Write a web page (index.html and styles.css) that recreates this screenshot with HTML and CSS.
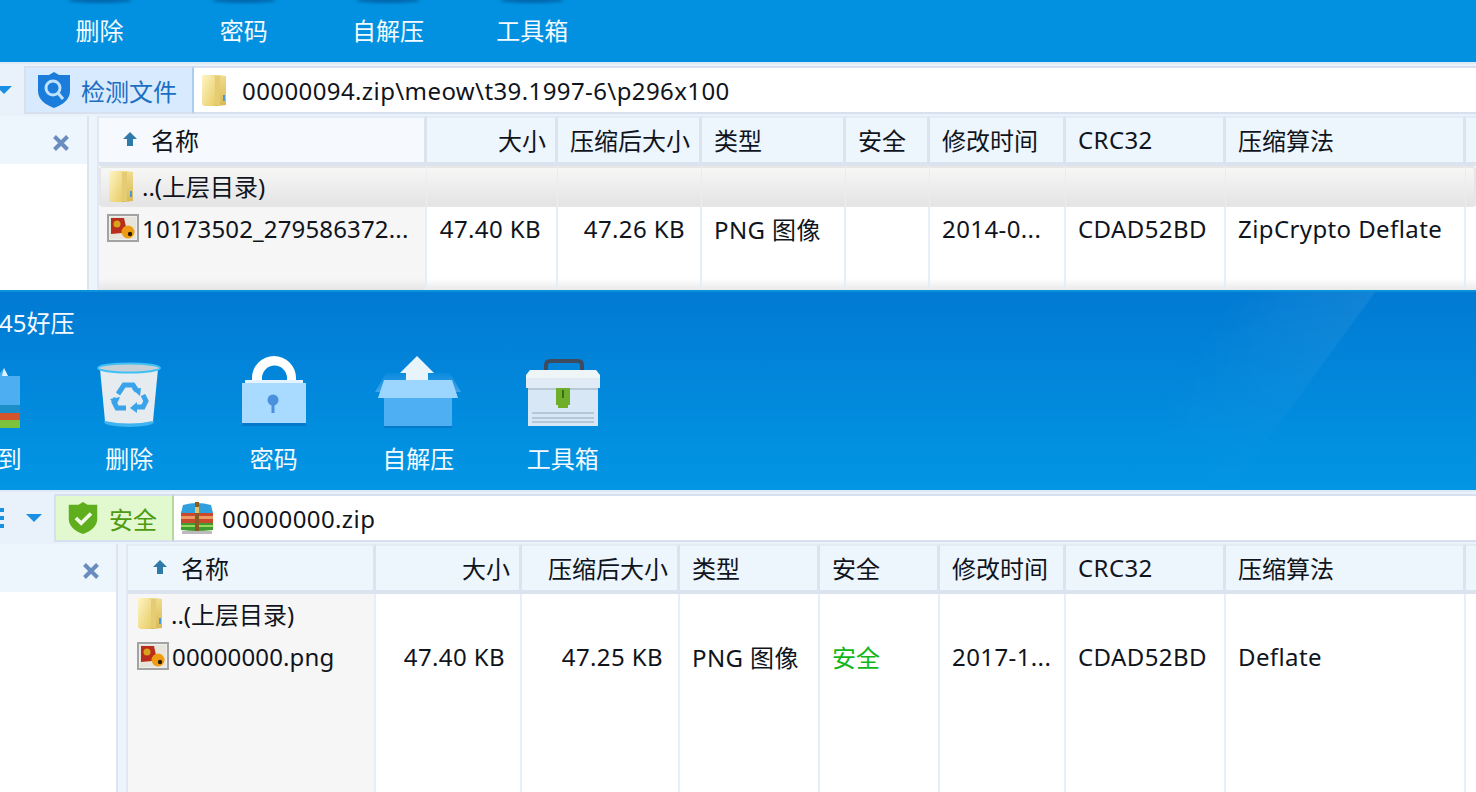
FILE: index.html
```html
<!DOCTYPE html>
<html lang="zh-CN">
<head>
<meta charset="utf-8">
<title>好压</title>
<link rel="stylesheet" href="styles.css">
</head>
<body>
<svg class="defs" width="0" height="0" aria-hidden="true">
  <defs>
    <linearGradient id="fold" x1="0" y1="0" x2="1" y2="1"><stop offset="0" stop-color="#fdf5c4"/><stop offset="1" stop-color="#e8cc66"/></linearGradient>
    <linearGradient id="fold2" x1="0" y1="0" x2="0" y2="1"><stop offset="0" stop-color="#f0dc8c"/><stop offset="1" stop-color="#d9b955"/></linearGradient>
    <linearGradient id="flap" x1="0" y1="0" x2="0" y2="1"><stop offset="0" stop-color="#3fa3ea" stop-opacity=".15"/><stop offset="1" stop-color="#3fa3ea"/></linearGradient>
    <symbol id="i-folder" viewBox="0 0 26 34">
      <path d="M1 2h17l7 1v29l-9 1-2 0H4l-3-2z" fill="url(#fold2)"/>
      <path d="M1 2h10l3 2v29H4l-3-2z" fill="url(#fold)"/>
      <path d="M14 3h5v29h-5z" fill="#e5cc74"/>
      <rect x="22" y="22" width="2" height="6" fill="#4a9ad8"/>
    </symbol>
    <symbol id="i-png" viewBox="0 0 32 28">
      <rect x="1" y="1" width="30" height="26" fill="#eee" stroke="#a3a3a3" stroke-width="2"/>
      <rect x="3" y="3" width="26" height="22" fill="#e7e5da"/>
      <path d="M4 4h13l2 9-4 6-11 1z" fill="#b92d1d"/>
      <circle cx="10" cy="10" r="3.500" fill="#d8a21c"/>
      <circle cx="21" cy="18" r="6.500" fill="#ef9c12"/>
      <circle cx="23" cy="20" r="2.200" fill="#2a1a08"/>
    </symbol>
    <symbol id="i-rar" viewBox="0 0 32 32">
      <path d="M2 3q14-4 28 0l2 8H0z" fill="#2f9fde"/>
      <rect y="11" width="32" height="10" fill="#c9492c"/>
      <rect y="14" width="32" height="3" fill="#ea9a62"/>
      <path d="M0 21h32v7q-16 2-32 0z" fill="#3f9a30"/>
      <rect y="23" width="32" height="2" fill="#9bd85a"/>
      <rect x="14" y="0" width="4" height="29" fill="#8a5a22"/>
      <rect x="14" y="5" width="4" height="6" fill="#e5c368"/>
      <rect x="1" y="29" width="30" height="3" fill="#bbb"/>
    </symbol>
  </defs>
</svg>

<section class="win win-a">
  <div class="bar bar-a">
    <div class="tools tools-a">
      <div class="tool"><i class="shade"></i><span>删除</span></div>
      <div class="tool"><i class="shade"></i><span>密码</span></div>
      <div class="tool"><i class="shade"></i><span>自解压</span></div>
      <div class="tool"><i class="shade"></i><span>工具箱</span></div>
    </div>
  </div>
  <div class="addr">
    <svg class="caret" viewBox="0 0 16 8"><path d="M0 0h16L8 8z" fill="#1a8fe3"/></svg>
    <div class="scan scan-blue">
      <svg class="shield" viewBox="0 0 32 36">
        <path d="M16 0l5 3h11v16c0 9-8 14-16 17C8 33 0 28 0 19V3h11z" fill="#1a7ddb"/>
        <circle cx="15" cy="16" r="7" fill="#1a7ddb" stroke="#bfe2ff" stroke-width="3"/>
        <path d="M20 21l5 6" stroke="#bfe2ff" stroke-width="3"/>
      </svg>
      <span>检测文件</span>
    </div>
    <div class="path">
      <svg class="ico-folder"><use href="#i-folder"/></svg>
      <span class="lat">00000094.zip\meow\t39.1997-6\p296x100</span>
    </div>
  </div>
  <div class="body">
    <div class="side"><div class="side-head"><svg class="close" viewBox="0 0 18 18"><path d="M2.500 2.500l13 13M15.500 2.500l-13 13" fill="none" stroke="#6a8cbe" stroke-width="4"/></svg></div></div>
    <div class="split"></div>
    <div class="table">
      <div class="row head">
        <div class="c name"><svg class="sort" viewBox="0 0 14 14"><path d="M7 0l7 7H10v7H4V7H0z" fill="#2f7aa8"/></svg>名称</div>
        <div class="c right">大小</div><div class="c right">压缩后大小</div><div class="c">类型</div><div class="c">安全</div><div class="c">修改时间</div><div class="c lat">CRC32</div><div class="c">压缩算法</div><div class="c"></div>
      </div>
      <div class="row up sel">
        <div class="c name"><svg class="ico-folder"><use href="#i-folder"/></svg>..(上层目录)</div>
        <div class="c"></div><div class="c"></div><div class="c"></div><div class="c"></div><div class="c"></div><div class="c"></div><div class="c"></div><div class="c"></div>
      </div>
      <div class="row file">
        <div class="c name"><svg class="ico-png"><use href="#i-png"/></svg><span class="lat-s">10173502_279586372...</span></div>
        <div class="c right lat">47.40 KB</div><div class="c right lat">47.26 KB</div><div class="c lat">PNG 图像</div><div class="c"></div><div class="c lat">2014-0...</div><div class="c lat">CDAD52BD</div><div class="c lat">ZipCrypto Deflate</div><div class="c"></div>
      </div>
      <div class="row fill">
        <div class="c name"></div><div class="c"></div><div class="c"></div><div class="c"></div><div class="c"></div><div class="c"></div><div class="c"></div><div class="c"></div><div class="c"></div>
      </div>
    </div>
  </div>
</section>

<section class="win win-b">
  <div class="bar bar-b">
    <div class="title">45好压</div>
    <div class="tools tools-b">
      <div class="tool">
        <svg class="big big-extract" viewBox="0 0 24 60"><path d="M0 8l6-8 4 8h12v36H0z" fill="#4eaef2"/><path d="M6 0l4 8H4z" fill="#dff1ff"/><rect y="37" width="22" height="8" fill="#1c8fc9"/><rect y="45" width="22" height="7" fill="#d4552b"/><rect y="52" width="22" height="8" fill="#7cc23a"/></svg>
        <span class="cut">到</span>
      </div>
      <div class="tool">
        <svg class="big big-trash" viewBox="0 0 64 66">
          <ellipse cx="32" cy="60" rx="25" ry="5" fill="#3fb4f0"/>
          <path d="M3 7h58l-5 52q-24 5-48 0z" fill="#e6ebf0"/>
          <ellipse cx="32" cy="6" rx="31" ry="4.500" fill="#c7d0d6" stroke="#3cc0f5" stroke-width="2"/>
          <g fill="none" stroke="#3aa3ea" stroke-width="5">
            <path d="M21 32l6-9h9l4 6"/><path d="M46 33l3 6-3 6h-8"/><path d="M29 46h-9l-3-6 2-4"/>
          </g>
          <g fill="#3aa3ea"><path d="M35 27l9-1-1 8z"/><path d="M40 40v11l-7-5z"/><path d="M13 37l10-2-4 9z"/></g>
        </svg>
        <span>删除</span>
      </div>
      <div class="tool">
        <svg class="big big-lock" viewBox="0 0 64 72">
          <path d="M10 25V22a22 22 0 0 1 44 0V25h-9V22a12.500 12.500 0 0 0-25 0V25z" fill="#fff"/>
          <rect x="3" y="24" width="58" height="3" fill="#e4f3ff"/>
          <rect y="27" width="64" height="40" fill="#a8dbff"/>
          <rect y="67" width="64" height="3" fill="#0a6cbd" opacity=".6"/>
          <circle cx="31" cy="44" r="5.500" fill="#4a90dc"/><rect x="29.500" y="44" width="3" height="13" fill="#4a90dc"/>
        </svg>
        <span>密码</span>
      </div>
      <div class="tool">
        <svg class="big big-box" viewBox="0 0 88 72">
          <path d="M1 36l11-19h64l11 19z" fill="url(#flap)"/>
          <path d="M43 0l17 17h-6v8H32v-8h-6z" fill="#e8f4fc"/>
          <rect x="10" y="42" width="68" height="28" fill="#4eaff3"/>
          <path d="M10 24h68l6 18H4z" fill="#9cd6ff"/>
          <rect x="10" y="70" width="68" height="2" fill="#0a6cbd" opacity=".6"/>
        </svg>
        <span>自解压</span>
      </div>
      <div class="tool">
        <svg class="big big-toolbox" viewBox="0 0 76 70">
          <path d="M21 14V7q0-4 4-4h28q4 0 4 4v7" fill="none" stroke="#3e4a60" stroke-width="4"/>
          <rect x="3" y="30" width="70" height="38" fill="#d8e7f5"/>
          <path d="M5 12h66l4 5v13H1V17z" fill="#eef5f7"/>
          <rect x="1" y="20" width="74" height="10" fill="#e0ebf5"/>
          <rect x="3" y="30" width="70" height="2" fill="#b8c9d8"/>
          <path d="M31 30h14v17h-2v3H33v-3h-2z" fill="#6fae2b"/><rect x="37" y="32" width="2" height="8" fill="#38700f"/>
          <g fill="#b4c8da"><rect x="7" y="54" width="62" height="2"/><rect x="7" y="59" width="62" height="2"/><rect x="7" y="63" width="62" height="2"/></g>
        </svg>
        <span>工具箱</span>
      </div>
    </div>
  </div>
  <div class="addr">
    <span class="dots"><i></i><i></i><i></i></span>
    <svg class="caret caret-b" viewBox="0 0 16 8"><path d="M0 0h16L8 8z" fill="#1a8fe3"/></svg>
    <div class="scan scan-green">
      <svg class="shield shield-g" viewBox="0 0 32 36">
        <path d="M16 0l5 3h11v16c0 9-8 14-16 17C8 33 0 28 0 19V3h11z" fill="#5fae1e"/>
        <path d="M8 18l6 6 11-11" fill="none" stroke="#f2fbe8" stroke-width="4"/>
      </svg>
      <span>安全</span>
    </div>
    <div class="path path-b">
      <svg class="ico-rar"><use href="#i-rar"/></svg>
      <span class="lat">00000000.zip</span>
    </div>
  </div>
  <div class="body">
    <div class="side"><div class="side-head"><svg class="close" viewBox="0 0 18 18"><path d="M2.500 2.500l13 13M15.500 2.500l-13 13" fill="none" stroke="#6a8cbe" stroke-width="4"/></svg></div></div>
    <div class="split"></div>
    <div class="table">
      <div class="row head">
        <div class="c name"><svg class="sort" viewBox="0 0 14 14"><path d="M7 0l7 7H10v7H4V7H0z" fill="#2f7aa8"/></svg>名称</div>
        <div class="c right">大小</div><div class="c right">压缩后大小</div><div class="c">类型</div><div class="c">安全</div><div class="c">修改时间</div><div class="c lat">CRC32</div><div class="c">压缩算法</div><div class="c"></div>
      </div>
      <div class="row up">
        <div class="c name"><svg class="ico-folder"><use href="#i-folder"/></svg>..(上层目录)</div>
        <div class="c"></div><div class="c"></div><div class="c"></div><div class="c"></div><div class="c"></div><div class="c"></div><div class="c"></div><div class="c"></div>
      </div>
      <div class="row file">
        <div class="c name"><svg class="ico-png"><use href="#i-png"/></svg><span class="lat-s">00000000.png</span></div>
        <div class="c right lat">47.40 KB</div><div class="c right lat">47.25 KB</div><div class="c lat">PNG 图像</div><div class="c safe">安全</div><div class="c lat">2017-1...</div><div class="c lat">CDAD52BD</div><div class="c lat">Deflate</div><div class="c"></div>
      </div>
      <div class="row fill">
        <div class="c name"></div><div class="c"></div><div class="c"></div><div class="c"></div><div class="c"></div><div class="c"></div><div class="c"></div><div class="c"></div><div class="c"></div>
      </div>
    </div>
  </div>
</section>
</body>
</html>
```

FILE: styles.css
```css
* { box-sizing: border-box; }
html, body { margin: 0; padding: 0; width: 1476px; height: 792px; overflow: hidden; background: #fff; }
body { font-family: "Noto Sans", "Noto Sans CJK SC", sans-serif; font-size: 24px; color: #10141c; }
.defs { position: absolute; }
.lat { letter-spacing: .4px; }
.lat-s { letter-spacing: .15px; }

.win { display: flex; flex-direction: column; overflow: hidden; }
.win-a { height: 290px; }
.win-b { height: 502px; }

/* blue ribbon */
.bar { flex: none; color: #f4faff; overflow: hidden; position: relative; }
.bar-a { height: 62px; background: #0291e0; }
.bar-b {
  height: 200px;
  border-top: 2px solid #0a93da;
  background: linear-gradient(180deg, #017ad3 0%, #0296e4 100%);
}
.bar-b::before {
  content: ""; position: absolute; inset: 0;
  background: linear-gradient(126deg, rgba(255,255,255,0) 76%, rgba(255,255,255,.04) 80%, rgba(255,255,255,.07) 84.800%, rgba(255,255,255,0) 85%);
  -webkit-mask-image: linear-gradient(180deg, #000 0%, rgba(0,0,0,.1) 85%);
  mask-image: linear-gradient(180deg, #000 0%, rgba(0,0,0,.1) 85%);
}
.title { position: relative; height: 64px; line-height: 62px; margin-left: -1px; white-space: nowrap; }
.tools { display: flex; position: relative; }
.tools-a { margin-left: 27.500px; }
.tools-b { margin-left: -87.500px; }
.tool { position: relative; flex: none; display: flex; flex-direction: column; align-items: center; justify-content: flex-end; line-height: 36px; }
.tools-a .tool { width: 144.200px; height: 62px; padding-bottom: 13px; }
.tools-b .tool { width: 144.500px; height: 134px; padding-bottom: 13px; }
.tool span { white-space: nowrap; }
.tool .cut { margin-left: 50px; }
.shade {
  position: absolute; top: -2px; left: 50%; width: 64px; height: 5px; margin-left: -32px;
  background: rgba(0,50,110,.45); border-radius: 50%; filter: blur(1.500px);
}
.big { position: absolute; bottom: 62px; left: 50%; transform: translateX(-50%); }
.big-extract { width: 24px; height: 60px; margin-left: 25px; }
.big-trash { width: 64px; height: 66px; }
.big-lock { width: 64px; height: 72px; }
.big-box { width: 88px; height: 72px; }
.big-toolbox { width: 76px; height: 70px; }

/* address bar */
.addr {
  flex: none; height: 54px; display: flex; align-items: center;
  background: #e9f2fb; border-top: 2px solid #dfeaf6; padding: 2px 0;
}
.caret { flex: none; width: 16px; height: 8px; margin-left: -4px; margin-right: 12px; }
.caret-b { margin-left: 22px; margin-right: 12px; }
.dots { flex: none; display: flex; flex-direction: column; gap: 4px; width: 4px; }
.dots i { display: block; width: 4px; height: 4px; background: #1a8fe3; }
.scan {
  flex: none; height: 100%; display: flex; align-items: center;
  border: 2px solid #d6e0ee;
}
.scan-blue { width: 170px; background: #d8eafd; color: #1a6fc4; padding-left: 12px; border-right: 2px solid #a9cdf0; gap: 11px; }
.scan-green { width: 120px; background: #e2f8cf; color: #4e9a10; padding-left: 12px; border-right: 2px solid #b5d89a; gap: 11px; }
.shield { width: 32px; height: 36px; flex: none; }
.shield-g { width: 30px; height: 32px; }
.path {
  flex: 1; height: 100%; background: #fff; display: flex; align-items: center; padding-left: 7px; gap: 15px;
  border-top: 2px solid #d6e0ee; border-bottom: 2px solid #d6e0ee; white-space: nowrap;
}
.path-b { gap: 9px; }
.ico-folder { width: 26px; height: 34px; flex: none; }
.ico-png { width: 32px; height: 28px; flex: none; }
.ico-rar { width: 32px; height: 32px; flex: none; }

/* main */
.body { flex: 1; min-height: 0; display: flex; }
.side { flex: none; background: #fff; border-right: 2px solid #dbe5f1; }
.win-a .side { width: 89px; }
.win-b .side { width: 118px; }
.side-head { height: 48px; background: #edf5fd; display: flex; align-items: center; justify-content: flex-end; padding-top: 6px; }
.win-a .side-head { padding-right: 17px; }
.win-b .side-head { padding-right: 16px; }
.close { width: 18px; height: 18px; flex: none; }
.split { flex: none; background: #edf4fc; border-right: 2px solid #dfe8f3; }
.win-a .split { width: 10px; }
.win-b .split { width: 10px; }

.table { flex: 1; min-width: 0; display: flex; flex-direction: column; overflow: hidden; }
.row { flex: none; display: grid; }
.win-a .row { grid-template-columns: 328px 131px 144px 144px 84px 136px 160px 240px 1fr; }
.win-b .row { grid-template-columns: 248px 146px 158px 140px 120px 126px 160px 240px 1fr; }
.c { display: flex; align-items: center; padding-left: 12px; padding-right: 10px; white-space: nowrap; border-right: 2px solid #e6eff8; min-width: 0; }
.right { justify-content: flex-end; padding-right: 15px; }
.head { height: 50px; }
.head .c { background: #edf5fd; border-top: 2px solid #e3ebf4; border-bottom: 4px solid #dbe4ee; border-right: 3px solid #dbe4ee; padding-bottom: 2px; }
.head .right { padding-right: 9px; }
.win-a .head .name { background: #f6faff; }
.head .name { padding-left: 24px; gap: 14px; }
.win-b .head .name { padding-left: 25px; }
.sort { width: 14px; height: 14px; flex: none; }
.name { background: #f6f6f6; padding-left: 8px; gap: 3px; }
.win-b .name { padding-left: 9px; }
.win-a .file .c { padding-bottom: 2px; }
.win-b .file .c, .win-b .up .c { padding-bottom: 4px; }
.up { height: 42px; }
.up .name { gap: 8px; }
.sel { height: 41px; background: linear-gradient(180deg, #f8f8f7, #e3e3e3); box-shadow: inset 0 0 0 2px #e6e6e6; border-radius: 4px; }
.sel .c { background: none; border-right: 1px solid #e9eef2; padding-bottom: 2px; }
.sel .name { padding-left: 9px; }
.file { height: 44px; }
.fill { flex: 1; }
.win-a .fill { background: linear-gradient(180deg, rgba(255,255,255,0) 70%, rgba(225,225,225,.7) 100%); }
.win-a .fill .c { background: none; }
.win-a .fill .name { background: linear-gradient(180deg, #f6f6f6 70%, #e6e6e6 100%); }
.safe { color: #11b71a; }
```
